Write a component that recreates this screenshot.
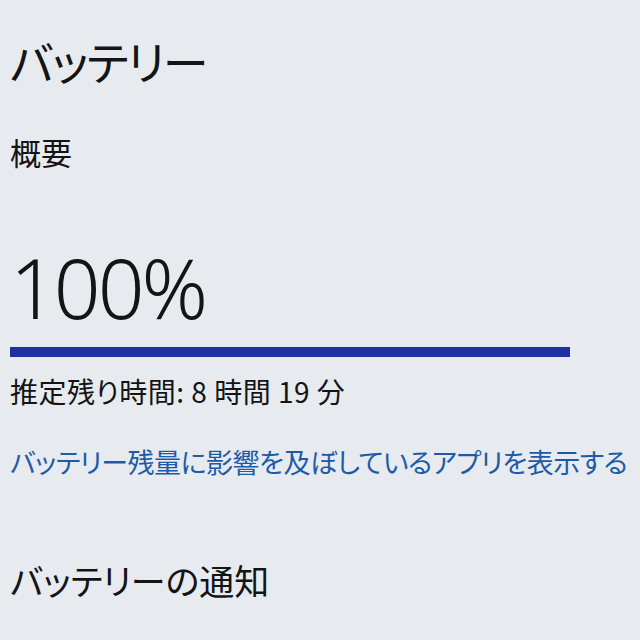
import React from 'react';

const jp = '[font-family:"Noto_Sans_CJK_JP",sans-serif] [font-feature-settings:"palt"]';

export default function App() {
  const remaining = { hours: 8, minutes: 19 };
  const percent = 100;

  return (
    <div className={`w-[640px] h-[640px] overflow-hidden bg-[#e7ebf0] text-[#141414] pl-[10px] ${jp}`}>
      <h1 className="pt-[30px] text-[46px] leading-[60px] font-normal tracking-[-1.5px]">バッテリー</h1>

      <h2 className="mt-[42px] text-[31px] leading-[40px] font-normal">概要</h2>

      <div className="mt-[74px] text-[82px] leading-[82px] font-light [font-family:'Noto_Sans',sans-serif] tracking-[-3px]">
        {percent}%
      </div>

      <div className="mt-[19px] w-[560px] h-[10px] bg-[#e7ebf0]">
        <div className="h-full bg-[#1c2fa3]" style={{ width: `${percent}%` }} />
      </div>

      <p className="mt-[15px] text-[28px] leading-[38px] tracking-[0.5px]">
        推定残り時間: {remaining.hours} 時間 {remaining.minutes} 分
      </p>

      <a className="block mt-[34px] text-[27px] leading-[36px] text-[#1d5ba6] tracking-[-0.5px]">
        バッテリー残量に影響を及ぼしているアプリを表示する
      </a>

      <h2 className="mt-[78px] text-[35px] leading-[44px] font-normal">バッテリーの通知</h2>
    </div>
  );
}
